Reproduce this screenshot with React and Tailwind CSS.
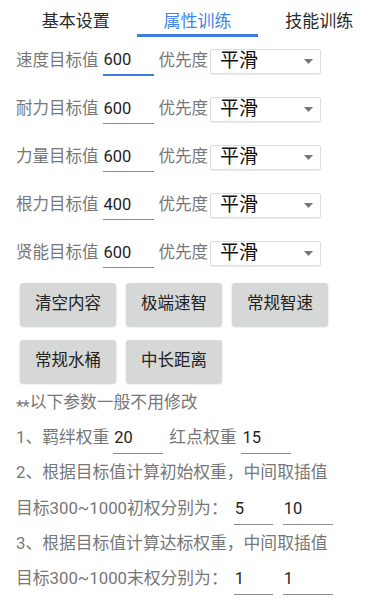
import React from "react";

const font = { fontFamily: "Roboto, 'Noto Sans CJK SC', sans-serif" };

const targets = [
    { label: "速度目标值", value: "600", focused: true },
    { label: "耐力目标值", value: "600" },
    { label: "力量目标值", value: "600" },
    { label: "根力目标值", value: "400" },
    { label: "贤能目标值", value: "600" },
];

const presets = [["清空内容", "极端速智", "常规智速"], ["常规水桶", "中长距离"]];

const Field = ({ value, width, focused }) => (
    <div
        className={`flex items-center h-[29px] px-[1px] text-[16.5px] text-[#1f1f1f] ${
            focused ? "border-b-2 border-[#3b7ddd]" : "border-b border-[#8a8a8a]"
        } ${width}`}
    >
        <span className="text-[#1f1f1f]">{value}</span>
    </div>
);

const Select = () => (
    <div className="flex items-center justify-between w-[111px] h-[25px] ml-[2px] pl-[9px] pr-[7px] border border-[#dedede] rounded-[2px] shadow-[0_1px_1px_rgba(0,0,0,0.08)] bg-white">
        <span className="text-[19px] text-[#111]">平滑</span>
        <svg width="9" height="5" viewBox="0 0 9 5">
            <path d="M0 0h9L4.5 5z" fill="#757575" />
        </svg>
    </div>
);

export default function App() {
    return (
        <div className="w-[380px] h-[600px] bg-white overflow-hidden" style={font}>
            <div className="flex h-[37px] pl-[15px]">
                {["基本设置", "属性训练", "技能训练"].map((t, i) => (
                    <div
                        key={t}
                        className={`flex-1 flex items-center justify-center text-[17px] pt-[10px] border-b-[3px] ${
                            i === 1
                                ? "text-[#3f86e6] border-[#3d7fe0]"
                                : "text-[#2a2a2a] border-transparent"
                        }`}
                    >
                        {t}
                    </div>
                ))}
            </div>

            <div className="pl-[16px]">
                {targets.map((row) => (
                    <div key={row.label} className="flex items-center h-[48px] pt-[1px]">
                        <span className="text-[16.5px] text-[#777]">{row.label}</span>
                        <div className="ml-[4px]">
                            <Field value={row.value} width="w-[51px]" focused={row.focused} />
                        </div>
                        <span className="ml-[5px] text-[16.5px] text-[#777]">优先度</span>
                        <Select />
                    </div>
                ))}

                <div className="flex flex-col gap-[14px] mt-[6px] pl-[4px]">
                    {presets.map((line, i) => (
                        <div key={i} className="flex gap-[10px]">
                            {line.map((b) => (
                                <button
                                    key={b}
                                    className="w-[96px] h-[43px] rounded-[3px] bg-[#d6d7d7] text-[16.5px] text-[#222] shadow-[0_1px_2px_rgba(0,0,0,0.2)]"
                                >
                                    {b}
                                </button>
                            ))}
                        </div>
                    ))}
                </div>

                <div className="flex flex-col mt-[2px] text-[16.8px] text-[#777]">
                    <div className="flex items-center h-[35px]">
                        <span className="relative top-[4px] text-[17px] leading-none tracking-[-1px] mr-[1px]">**</span>
                        以下参数一般不用修改
                    </div>
                    <div className="flex items-center h-[35px]">
                        <span>1、羁绊权重</span>
                        <div className="ml-[4px] pt-[3px]">
                            <Field value="20" width="w-[50px]" />
                        </div>
                        <span className="ml-[6px]">红点权重</span>
                        <div className="ml-[5px] pt-[3px]">
                            <Field value="15" width="w-[50px]" />
                        </div>
                    </div>
                    <div className="flex items-center h-[36px]">2、根据目标值计算初始权重，中间取插值</div>
                    <div className="flex items-center h-[35px]">
                        <span>目标300~1000初权分别为：</span>
                        <div className="ml-[6px] pt-[3px]">
                            <Field value="5" width="w-[39px]" />
                        </div>
                        <div className="ml-[10px] pt-[3px]">
                            <Field value="10" width="w-[50px]" />
                        </div>
                    </div>
                    <div className="flex items-center h-[35px]">3、根据目标值计算达标权重，中间取插值</div>
                    <div className="flex items-center h-[35px]">
                        <span>目标300~1000末权分别为：</span>
                        <div className="ml-[6px] pt-[3px]">
                            <Field value="1" width="w-[39px]" />
                        </div>
                        <div className="ml-[10px] pt-[3px]">
                            <Field value="1" width="w-[50px]" />
                        </div>
                    </div>
                </div>
            </div>
        </div>
    );
}
